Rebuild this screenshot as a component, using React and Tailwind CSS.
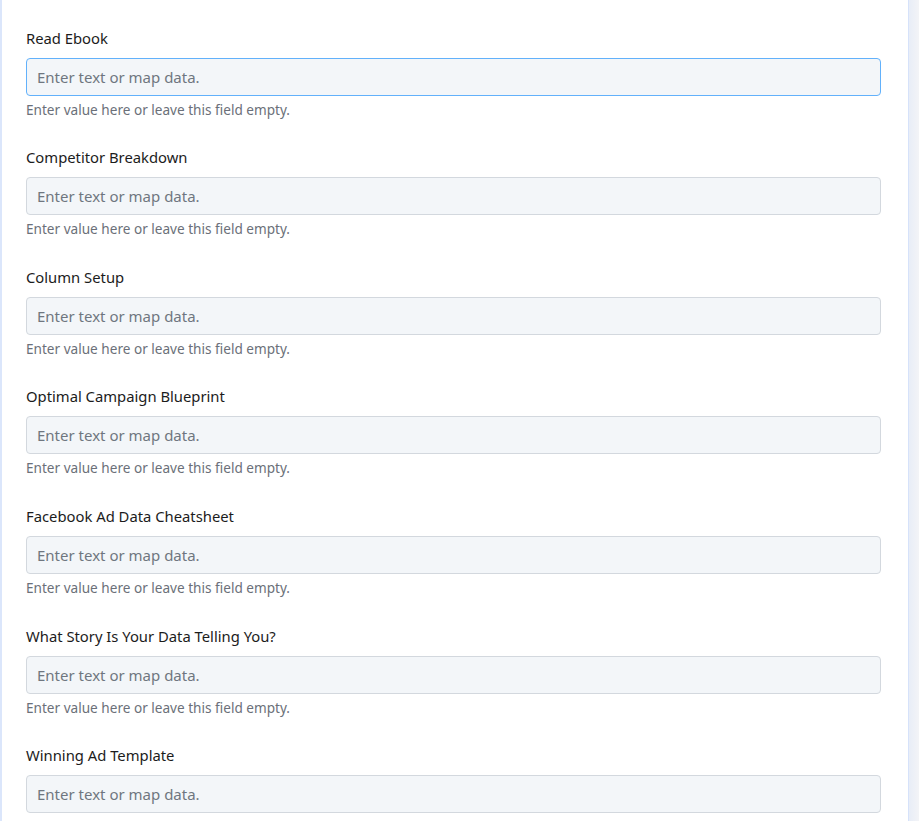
import React from 'react'

const fields = [
  'Read Ebook',
  'Competitor Breakdown',
  'Column Setup',
  'Optimal Campaign Blueprint',
  'Facebook Ad Data Cheatsheet',
  'What Story Is Your Data Telling You?',
  'Winning Ad Template',
]

const Field = ({ label, focused }) => (
  <div className="flex flex-col">
    <label className="text-[14.8px] leading-5 text-[#1c1c1c]">{label}</label>
    <input
      type="text"
      placeholder="Enter text or map data."
      className={`mt-2.5 h-[38px] w-full rounded-[4px] border bg-[#f3f6f9] px-[10px] text-[15px] text-[#333] placeholder:text-[#6f7680] outline-none ${
        focused ? 'border-[#62b1fb]' : 'border-[#d3d8de]'
      }`}
    />
    <p className="mt-[5px] text-[13.6px] leading-[18px] text-[#6b7079]">
      Enter value here or leave this field empty.
    </p>
  </div>
)

const App = () => {
  return (
    <div
      className="flex h-[821px] overflow-hidden bg-white"
      style={{ fontFamily: '"Noto Sans", "Open Sans", sans-serif' }}
    >
      <div className="w-[2px] shrink-0 bg-[#dbe6fb]" />
      <div className="flex-1 pl-6 pr-[27px] pt-[27.6px]">
        <div className="flex flex-col gap-[28.6px]">
          {fields.map((f, i) => (
            <Field key={i} label={f} focused={i === 0} />
          ))}
        </div>
      </div>
      <div className="w-[11px] shrink-0 border-l border-[#d6e2fa] bg-gradient-to-r from-[#e8edf7] to-[#f3f4f7]" />
    </div>
  )
}

export default App
